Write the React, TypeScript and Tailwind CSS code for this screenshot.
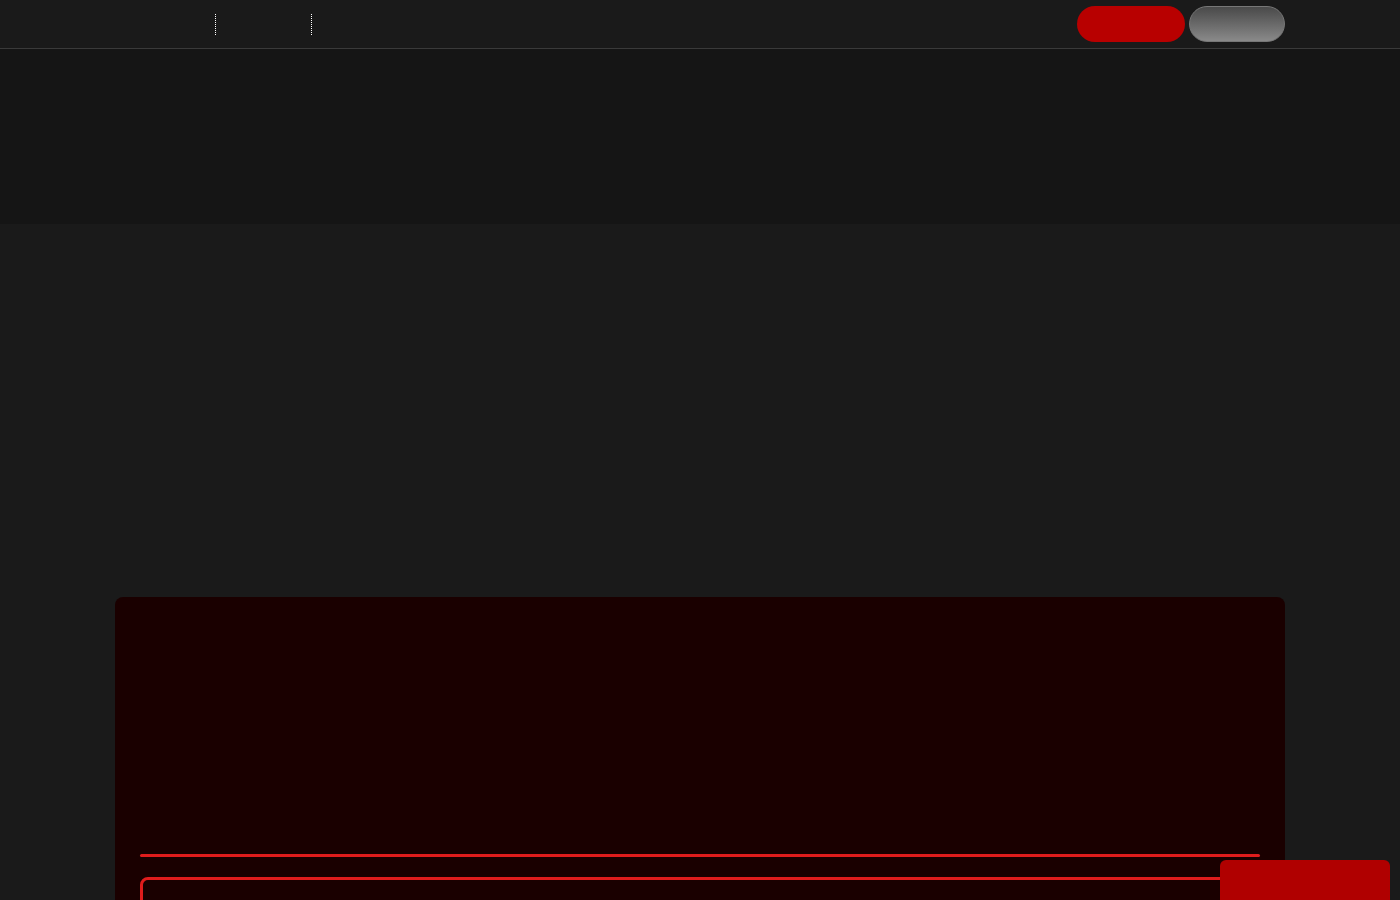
export default function App() {
  return (
    <div className="min-h-[900px] overflow-hidden bg-[#1a1a1a] font-['Liberation_Sans',sans-serif]">
      <header className="flex h-[49px] items-center border-b border-[#3a3a3a] bg-[#1a1a1a] pl-[215px] pr-[115px]">
        <nav className="flex h-full items-center pt-px">
          <span className="h-[21px] border-l border-dotted border-white" />
          <span className="ml-[95px] h-[21px] border-l border-dotted border-white" />
        </nav>
        <div className="ml-auto flex items-center gap-1">
          <button className="h-9 w-[108px] rounded-full bg-[#b80000]" />
          <button className="h-9 w-24 rounded-full border border-[#777] bg-gradient-to-b from-[#4a4a4a] to-[#8a8a8a]" />
        </div>
      </header>

      <section className="h-[175px] bg-[#151515]" />

      <main className="px-[115px] pt-[373px]">
        <div className="rounded-lg bg-[#1a0000] px-[25px] pt-[257px]">
          <div className="h-[3px] rounded-full bg-[#e01c1c]" />
          <div className="mt-[20px] h-[60px] rounded-lg border-[3px] border-[#e01c1c]" />
        </div>
      </main>

      <button className="fixed bottom-[-20px] right-[10px] h-[60px] w-[170px] rounded-t-md bg-[#b00000]" />
    </div>
  );
}
